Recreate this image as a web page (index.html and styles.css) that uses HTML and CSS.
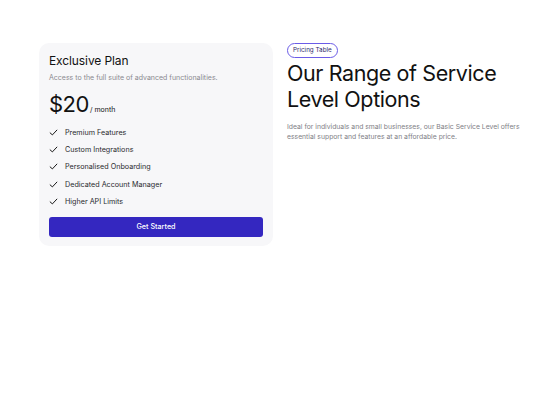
FILE: index.html
```html
<!DOCTYPE html>
<html>
<head>
<meta charset="utf-8">
<link rel="stylesheet" href="styles.css">
</head>
<body>
<div class="page">
  <div class="card">
    <h2 class="plan">Exclusive Plan</h2>
    <p class="desc">Access to the full suite of advanced functionalities.</p>
    <div class="price"><span class="amount">$20</span><span class="per">/ month</span></div>
    <ul class="features">
      <li><svg class="check" viewBox="0 0 12 12"><path d="M1.5 6.5 L4.5 9.2 L10.5 2.8" fill="none" stroke="#111" stroke-width="1.3" stroke-linecap="round" stroke-linejoin="round"/></svg>Premium Features</li>
      <li><svg class="check" viewBox="0 0 12 12"><path d="M1.5 6.5 L4.5 9.2 L10.5 2.8" fill="none" stroke="#111" stroke-width="1.3" stroke-linecap="round" stroke-linejoin="round"/></svg>Custom Integrations</li>
      <li><svg class="check" viewBox="0 0 12 12"><path d="M1.5 6.5 L4.5 9.2 L10.5 2.8" fill="none" stroke="#111" stroke-width="1.3" stroke-linecap="round" stroke-linejoin="round"/></svg>Personalised Onboarding</li>
      <li><svg class="check" viewBox="0 0 12 12"><path d="M1.5 6.5 L4.5 9.2 L10.5 2.8" fill="none" stroke="#111" stroke-width="1.3" stroke-linecap="round" stroke-linejoin="round"/></svg>Dedicated Account Manager</li>
      <li><svg class="check" viewBox="0 0 12 12"><path d="M1.5 6.5 L4.5 9.2 L10.5 2.8" fill="none" stroke="#111" stroke-width="1.3" stroke-linecap="round" stroke-linejoin="round"/></svg>Higher API Limits</li>
    </ul>
    <button class="cta">Get Started</button>
  </div>
  <div class="intro">
    <span class="badge">Pricing Table</span>
    <h1 class="title">Our Range of Service Level Options</h1>
    <p class="lead">Ideal for individuals and small businesses, our Basic Service Level offers essential support and features at an affordable price.</p>
  </div>
</div>
</body>
</html>
```
FILE: styles.css
```css
* { box-sizing: border-box; }
body {
  margin: 0;
  font-family: Inter, "Liberation Sans", sans-serif;
  color: #111;
  background: #fff;
}
.page {
  display: flex;
  align-items: flex-start;
  gap: 14px;
  padding: 43px 20px 0 39px;
}
.card {
  width: 234px;
  background: #f7f7f9;
  border-radius: 10px;
  padding: 10px 10px 9px 10px;
}
.plan {
  margin: 0;
  font-size: 12px;
  font-weight: 400;
  letter-spacing: -0.1px;
  line-height: 16px;
}
.desc {
  margin: 4px 0 0;
  font-size: 7px;
  color: #8a8a90;
  line-height: 10px;
}
.price {
  margin-top: 7px;
  display: flex;
  align-items: baseline;
}
.amount {
  font-size: 22px;
  line-height: 28px;
  letter-spacing: -0.5px;
}
.per {
  font-size: 7px;
  margin-left: 1px;
}
.features {
  list-style: none;
  margin: 6px 0 0;
  padding: 0;
}
.features li {
  display: flex;
  align-items: center;
  height: 17.2px;
  font-size: 7.2px;
  color: #2a2a2e;
}
.check {
  width: 9px;
  height: 9px;
  margin-right: 7px;
  flex: none;
}
.cta {
  display: block;
  width: 100%;
  margin-top: 7px;
  height: 20px;
  border: 0;
  border-radius: 3px;
  background: #3427c0;
  color: #fff;
  font-family: inherit;
  font-size: 7.2px;
  font-weight: 500;
  padding: 0;
}
.intro {
  width: 240px;
  display: flex;
  flex-direction: column;
  align-items: flex-start;
}
.badge {
  display: block;
  border: 1px solid #6b5ce7;
  border-radius: 8px;
  padding: 0 5px;
  height: 15px;
  line-height: 13px;
  font-size: 6.3px;
  color: #2d2a6b;
}
.title {
  margin: 2px 0 0;
  font-size: 21.5px;
  font-weight: 400;
  line-height: 26px;
  letter-spacing: -0.4px;
}
.lead {
  margin: 10px 0 0;
  font-size: 6.8px;
  line-height: 10px;
  color: #808086;
}
```
